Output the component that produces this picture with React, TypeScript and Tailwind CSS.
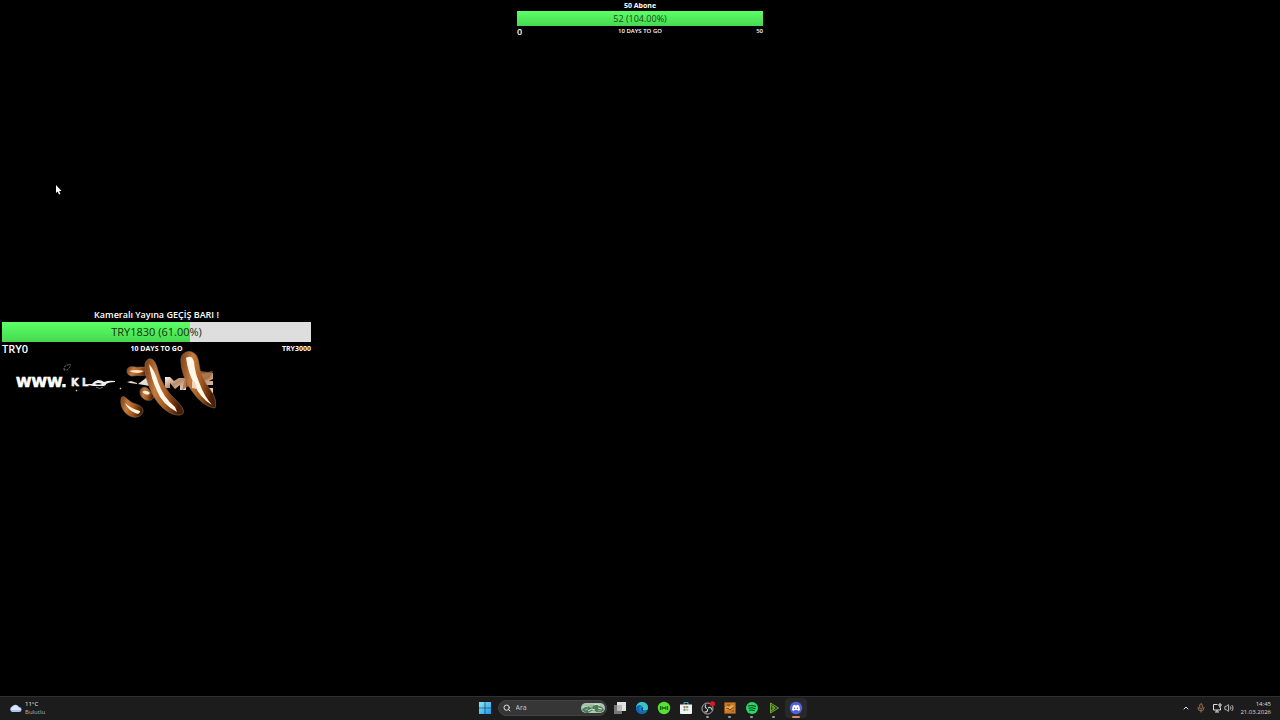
import type { ReactNode } from "react";
import { ChevronUp, Mic, Search, Volume2 } from "lucide-react";

type GoalProps = {
  title: string;
  value: string;
  percent: number;
  start: string;
  left: string;
  end: string;
  size: "small" | "large";
};

function Goal({ title, value, percent, start, left, end, size }: GoalProps) {
  const small = size === "small";
  return (
    <section className={small ? "w-[246px]" : "w-[309px]"} aria-label={title}>
      <h2
        className={
          small
            ? "h-[11px] text-center text-[7px] leading-[11px] font-bold"
            : "h-3 text-center text-[9px] leading-3 font-semibold"
        }
      >
        {title}
      </h2>
      <div
        className={
          small
            ? "grid h-[15px] bg-[#dedede] text-[9px] leading-[15px]"
            : "mt-px grid h-5 bg-[#dedede] text-[11px] leading-5"
        }
      >
        <div
          className="col-start-1 row-start-1 bg-linear-to-b from-[#5cff67] to-[#46d950]"
          style={{ width: `${percent}%` }}
        />
        <span
          className={
            small
              ? "z-10 col-start-1 row-start-1 text-center font-medium text-[#164d1a]"
              : "z-10 col-start-1 row-start-1 text-center font-medium text-[#12300f]"
          }
        >
          {value}
        </span>
      </div>
      <div
        className={
          small
            ? "grid h-[11px] grid-cols-3 items-center text-[6px] leading-[11px] font-semibold"
            : "grid h-[14px] grid-cols-3 items-center text-[7px] leading-[14px] font-bold"
        }
      >
        <span className={small ? "text-[9px]" : "text-[11px] font-semibold"}>{start}</span>
        <span className="text-center">{left}</span>
        <span className="text-right">{end}</span>
      </div>
    </section>
  );
}

function SplashBanner() {
  return (
    <svg className="block h-[70px] w-[220px]" viewBox="0 0 220 70" role="img" aria-label="Sponsor">
      <defs>
        <linearGradient id="amber" x1="0" y1="0" x2="1" y2="0.2">
          <stop offset="0" stopColor="#7b3b12" />
          <stop offset="0.35" stopColor="#c67a3c" />
          <stop offset="0.65" stopColor="#a65a1e" />
          <stop offset="1" stopColor="#4b1f05" />
        </linearGradient>
        <linearGradient id="steel" x1="0" y1="0" x2="1" y2="1">
          <stop offset="0" stopColor="#fff6ed" />
          <stop offset="0.5" stopColor="#b98b6d" />
          <stop offset="1" stopColor="#f3dfd0" />
        </linearGradient>
        <filter id="soft" x="-20%" y="-20%" width="140%" height="140%">
          <feGaussianBlur stdDeviation="0.6" />
        </filter>
      </defs>
      <text x="16" y="37" fill="#fff" stroke="#fff" strokeWidth="0.7" fontSize="14" fontWeight="700" fontFamily="DejaVu Sans">
        WWW.
      </text>
      <text y="36" fill="#f2f2f2" stroke="#f2f2f2" strokeWidth="0.5" fontSize="10" fontWeight="700" fontFamily="DejaVu Sans">
        <tspan x="71">K</tspan>
        <tspan x="82">L</tspan>
      </text>
      <path d="M88 34h4q2-3 6-4 4 0 6 2 5-2 11-1v1q-6 0-9 2 0 2-4 2h-9l-5-1Z" fill="#eee" />
      <path d="M95 34q3-2 7 0-3 1-7 0Z" fill="#000" />
      <g fill="none" stroke="#777" strokeWidth="1">
        <path d="M64 20q0-5 4-5l2-1q1 3-3 6Z" strokeDasharray="2 1" />
        <path d="m76 41 1-1M120 39l1-1" stroke="#ccc" strokeWidth="1.5" />
        <path d="M96 37q4 3 7 0" stroke="#777" />
      </g>
      <path d="M127 32l4-1 6 2v1l-7-1ZM138 34l8-6 4 2v6Z" fill="#e8dcd4" />
      <path d="M165 27h5l4 4 5-3h7v12h-6v-5l-5 4-5-6v5h-5Z" fill="url(#steel)" />
      <path d="M187 28l12-4 9-1h5v6l-4 2h4v4h-9v3h9v5h-17l-9-8Z" fill="url(#steel)" />
      <path d="M187 25l13-4 8 1 5-1-3 7-9 4-3 9-9-5-7 4 2-8Z" fill="#a66b3e" opacity="0.8" />
      <g fill="url(#amber)" stroke="#87705c" strokeWidth="0.6">
        <path d="M121 49c-1 6 2 14 9 17 6 3 13 0 13-5 0-6-7-6-12-9-4-3-9-9-10-3Z" />
        <path d="M127 21c0-4 4-5 8-4 4 1 9-1 12 1 2 2 2 6-1 7-4 1-9 0-13 1-4 0-6-2-6-5Z" />
        <path d="M140 42c0-4 4-6 7-4l7 7c0 5-4 6-8 5-3-1-6-4-6-8Z" />
        <path d="M145 14c1-5 6-7 9-3 4 5 4 14 9 22 5 11 12 15 18 23 3 4 4 8-1 9-8 1-18-6-24-15-6-9-12-24-11-36Z" />
        <path d="M181 11c-1-7 6-11 11-9 8 3 6 13 9 21 4 11 8 14 12 21 3 5 3 11 2 14-9-1-17-8-23-17-6-8-11-20-11-30Z" />
      </g>
      <g filter="url(#soft)">
        <path d="M125 53q5 5 15 8 0 4-5 2-7-3-10-10Z" fill="#fff2dd" />
        <path d="M129 21q7-2 15 0-6 4-15 0Z" fill="#ffe2bd" />
        <path d="M142 42q4-3 8 1-2 4-8-1Z" fill="#fff1df" />
        <path d="M149 14q6 7 9 18 5 15 17 25l2 5q-15-8-20-21-6-13-8-27Z" fill="#fff7ea" />
        <path d="M186 8q6-4 8 4 1 11 5 20 5 14 13 23-12-7-18-21-6-12-8-26Z" fill="#fff7ea" />
      </g>
      <path d="m192 31 3 1 2 7-5-1Z" fill="#f5d4b7" />
    </svg>
  );
}

function WindowsIcon() {
  return (
    <svg className="h-3 w-3" viewBox="0 0 12 12" aria-hidden="true">
      <defs>
        <linearGradient id="win" x2="1" y2="1">
          <stop stopColor="#8be6ff" />
          <stop offset="1" stopColor="#159bea" />
        </linearGradient>
      </defs>
      <path d="M0 0h5.7v5.7H0zM6.3 0H12v5.7H6.3zM0 6.3h5.7V12H0zM6.3 6.3H12V12H6.3z" fill="url(#win)" />
    </svg>
  );
}

function WeatherIcon() {
  return (
    <svg className="h-[10px] w-[13px]" viewBox="0 0 13 10" aria-hidden="true">
      <path d="M3 9a3 3 0 0 1 0-5.5A4 4 0 0 1 10 4a2.5 2.5 0 0 1 0 5Z" fill="#a9c7f4" />
      <path d="M2 7q0-3 3-4 3-2 5 2 2 0 2 2Z" fill="#d9e6ff" />
    </svg>
  );
}

function LandscapeIcon() {
  return (
    <svg className="h-3 w-6" viewBox="0 0 24 12" aria-hidden="true">
      <rect y="1" width="24" height="10" rx="5" fill="#a9c6b0" />
      <path d="M1 8q3-6 6-4l3 2 4-4 7 3 2 3q-3 3-7 2l-4-2-5 3H5Z" fill="#4d7a5c" />
      <path d="M2 6l3-2 2 1M13 3l3-1 3 2M7 9l4-2 3 1M17 6l4 1" stroke="#dfe8cf" strokeWidth="1" fill="none" />
      <path d="m9 3 3 2M4 8l3-1M17 9l3-1" stroke="#91b36f" strokeWidth="1.3" />
    </svg>
  );
}

function Icon({ children }: { children: ReactNode }) {
  return (
    <svg className="h-[14px] w-[14px]" viewBox="0 0 14 14" aria-hidden="true">
      {children}
    </svg>
  );
}

const apps: { name: string; running: boolean; active?: boolean; icon: ReactNode }[] = [
  {
    name: "Task view",
    running: false,
    icon: (
      <Icon>
        <path d="M1 4h8v9H1z" fill="#777" />
        <path d="M4 1h9v9H4z" fill="#e2e2e2" />
        <path d="M4 4h5v6H4z" fill="#b8b8b8" />
      </Icon>
    ),
  },
  {
    name: "Edge",
    running: false,
    icon: (
      <Icon>
        <circle cx="7" cy="7" r="6" fill="#1489d8" />
        <path d="M1 6C2 2 5 1 7 1c4 0 6 3 6 6 0 2-2 3-4 3-1 0-2-1-1-2 1-3-3-5-7-2Z" fill="#38c5c5" />
        <path d="M6 5c-4 2-1 7 5 6-3 4-9 2-10-3 0-3 3-5 6-3Z" fill="#1265b5" />
        <path d="M7 6.5c1.5 0 1.5.8.8 1.5s0 1.8 2 1.8l3-1v.8q-3.500 1.400-5.500.4-2-1.500-.3-3.500Z" fill="#173044" />
      </Icon>
    ),
  },
  {
    name: "Xbox",
    running: false,
    icon: (
      <Icon>
        <circle cx="7" cy="7" r="6.2" fill="#5bdf32" />
        <path d="M3.500 5v4M10.500 5v4" stroke="#176318" strokeWidth="1.2" />
        <path d="M4.600 5.200h1v1h2.800v-1h1v3.600h-1v-1H5.600v1h-1Z" fill="#176318" />
      </Icon>
    ),
  },
  {
    name: "Microsoft Store",
    running: false,
    icon: (
      <Icon>
        <path d="M5 4V1.5h4V4" fill="none" stroke="#43a8d8" strokeWidth="1" />
        <path d="M1 3.5h12V12q0 1-1 1H2q-1 0-1-1Z" fill="#edf2f5" />
        <path d="M4.5 5h2v2h-2z" fill="#eb5b3c" />
        <path d="M7.2 5h2v2h-2z" fill="#65ae38" />
        <path d="M4.5 7.7h2v2h-2z" fill="#219be1" />
        <path d="M7.2 7.7h2v2h-2z" fill="#e7b626" />
      </Icon>
    ),
  },
  {
    name: "OBS Studio",
    running: true,
    icon: (
      <Icon>
        <circle cx="6.5" cy="7.5" r="5.5" fill="#202020" stroke="#bbb" strokeWidth="0.9" />
        <path d="M6 7.5q-3-1-1-4M7 7q3-2 4 2M6.5 8q1 3-3 3" fill="none" stroke="#ccc" strokeWidth="1.1" />
        <circle cx="11.5" cy="2.8" r="2.5" fill="#e31525" />
      </Icon>
    ),
  },
  {
    name: "Game",
    running: true,
    icon: (
      <Icon>
        <rect x="1" y="1" width="12" height="12" rx="1" fill="#8f4d13" />
        <path d="M2 2h10v10H2z" fill="#c47c2e" />
        <path d="m2 7 2-2 2 1 3-2 2 1-1 3-3 1-2-1-2 2Z" fill="#e5aa55" />
        <path d="m3 8 2-1 2 2 4-3M4 4h3M9 10h2" stroke="#7d430f" fill="none" />
      </Icon>
    ),
  },
  {
    name: "Spotify",
    running: true,
    icon: (
      <Icon>
        <circle cx="7" cy="7" r="6" fill="#27d866" />
        <path d="M3.5 5q4-1.2 7 .5M4 7.2q3.4-1 6 .5M4.5 9.2q2.7-.7 4.7.4" fill="none" stroke="#123d22" strokeWidth="1.1" strokeLinecap="round" />
      </Icon>
    ),
  },
  {
    name: "Player",
    running: true,
    icon: (
      <Icon>
        <path d="m3.5 2 8 5-8 5Z" fill="#29401f" stroke="#6aa927" strokeWidth="1" />
        <path d="M4 4.5 8 7l-4 3M6 5v4" fill="none" stroke="#95c844" strokeWidth="0.7" />
      </Icon>
    ),
  },
  {
    name: "Discord",
    running: true,
    active: true,
    icon: (
      <Icon>
        <circle cx="7" cy="7" r="6.2" fill="#5262dc" />
        <path d="M4.3 4.3 6 3.8l.4.6h1.2l.4-.6 1.7.5q1.4 2.1 1.3 4.6l-1.8 1-.6-.9H5.4l-.6.9-1.8-1q-.1-2.500 1.3-4.600Z" fill="#fff" />
        <ellipse cx="5.6" cy="7.2" rx=".7" ry=".8" fill="#5262dc" />
        <ellipse cx="8.4" cy="7.2" rx=".7" ry=".8" fill="#5262dc" />
      </Icon>
    ),
  },
];

function Taskbar() {
  return (
    <footer className="grid h-6 grid-cols-[1fr_auto_1fr] items-center border-t border-[#303030] bg-[#1c1c1c] pb-0.5">
      <button type="button" className="flex items-center gap-[3px] justify-self-start pl-[9px] text-left text-[6px] leading-2" aria-label="Weather">
        <WeatherIcon />
        <span>
          <span className="block text-[#eeeeee]">11°C</span>
          <span className="block text-[#b5b5b5]">Bulutlu</span>
        </span>
      </button>
      <nav className="flex items-center pl-[5px]" aria-label="Taskbar">
        <button type="button" aria-label="Start" className="mr-[7px]">
          <WindowsIcon />
        </button>
        <label className="mr-[2px] flex h-4 w-[109px] items-center rounded-full border border-[#414141] bg-[#363636] pr-px pl-1">
          <Search className="h-2 w-2 shrink-0 text-[#dddddd]" strokeWidth={3} aria-hidden="true" />
          <input
            type="search"
            aria-label="Ara"
            placeholder="Ara"
            className="min-w-0 flex-1 bg-transparent pl-[5px] text-[7px] leading-3 outline-none placeholder:text-[#cccccc]"
          />
          <LandscapeIcon />
        </label>
        {apps.map((app) => (
          <button
            key={app.name}
            type="button"
            aria-label={app.name}
            className={
              app.active
                ? "flex h-5 w-[22px] flex-col items-center justify-between rounded-sm bg-[#292929] pt-[3px]"
                : "flex h-5 w-[22px] flex-col items-center justify-between pt-[3px]"
            }
          >
            {app.icon}
            {app.running && (
              <span
                className={app.active ? "h-0.5 w-2 rounded-full bg-[#d58b68]" : "h-0.5 w-[3px] rounded-full bg-[#999999]"}
              />
            )}
          </button>
        ))}
      </nav>
      <div className="flex items-center justify-self-end pr-[9px] text-[#dddddd]">
        <button type="button" aria-label="Hidden icons" className="mr-1.5">
          <ChevronUp className="h-2 w-2" strokeWidth={3} />
        </button>
        <button type="button" aria-label="Microphone" className="mr-1.5">
          <Mic className="h-[10px] w-[10px] text-[#b5795c]" />
        </button>
        <button type="button" aria-label="Network and sound" className="mr-1.5 flex items-center gap-0.5">
          <svg className="h-[10px] w-[10px]" viewBox="0 0 10 10" fill="none" stroke="currentColor" aria-hidden="true">
            <path d="M5.5 1.5h-4v5.5h7V5M5 7v2M3 9h4" />
            <path d="M7 1h2v2H7zM8 3v2" />
          </svg>
          <Volume2 className="h-[10px] w-[10px]" />
        </button>
        <time className="text-right text-[6px] leading-2" dateTime="2026-03-21T14:45">
          <span className="block">14:45</span>
          <span className="block">21.03.2026</span>
        </time>
      </div>
    </footer>
  );
}

export default function App() {
  return (
    <div className="flex min-h-screen flex-col bg-black font-['Open_Sans','Noto_Sans',sans-serif] text-white">
      <main className="relative flex flex-1 flex-col">
        <div className="flex justify-center">
          <Goal size="small" title="50 Abone" value="52 (104.00%)" percent={100} start="0" left="10 DAYS TO GO" end="50" />
        </div>
        <div className="mt-[272px] pl-0.5">
          <Goal size="large" title="Kameralı Yayına GEÇİŞ BARI !" value="TRY1830 (61.00%)" percent={61} start="TRY0" left="10 DAYS TO GO" end="TRY3000" />
        </div>
        <div className="-mt-[6px]">
          <SplashBanner />
        </div>
        <svg className="absolute top-[185px] left-[55px] h-[10px] w-[7px]" viewBox="0 0 7 10" aria-hidden="true">
          <path d="M1 0v8l1.7-1.5L4 9.500l1.4-.6L4.2 6H6.500Z" fill="#fff" />
        </svg>
      </main>
      <Taskbar />
    </div>
  );
}
